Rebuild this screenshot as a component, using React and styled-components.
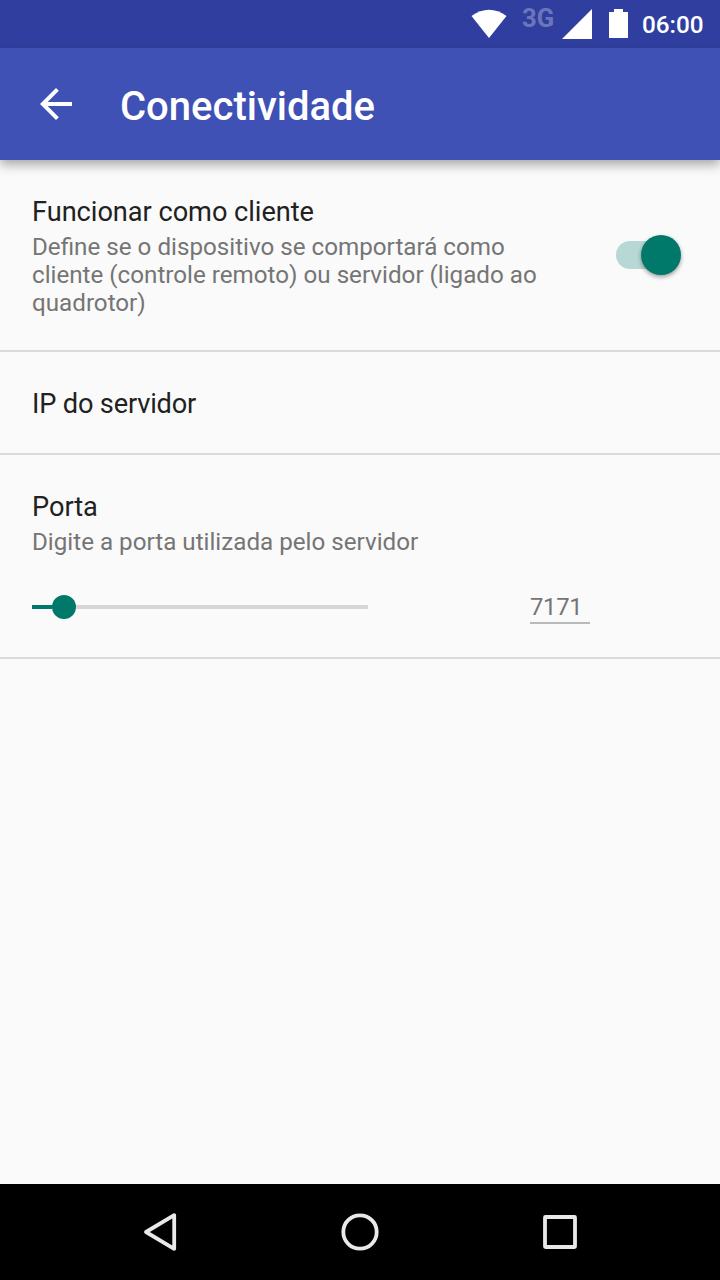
import React from "react";
import styled, { createGlobalStyle } from "styled-components";

const GlobalStyle = createGlobalStyle`
  * { box-sizing: border-box; }
  body { margin: 0; background: #fafafa; }
`;

const Screen = styled.div`
  display: flex;
  flex-direction: column;
  width: 720px;
  height: 1280px;
  background: #fafafa;
  font-family: Roboto, sans-serif;
  overflow: hidden;
`;

const StatusBar = styled.div`
  display: flex;
  flex: none;
  height: 48px;
  padding-right: 16.5px;
  justify-content: flex-end;
  align-items: flex-start;
  background: #303f9f;
  color: #fff;
`;

const StatusIcons = styled.svg`
  display: block;
  flex: none;
  fill: #fff;
`;

const NetworkType = styled.span`
  width: 32px;
  margin: 3px 8px 0 15px;
  font-size: 25.6px;
  line-height: 30px;
  font-weight: 700;
  color: rgba(255, 255, 255, 0.3);
  white-space: nowrap;
`;

const Clock = styled.span`
  width: 61.5px;
  margin-left: 14px;
  font-size: 24.3px;
  line-height: 48px;
  padding-top: 1px;
  font-weight: 500;
  white-space: nowrap;
`;

const AppBar = styled.header`
  display: flex;
  flex: none;
  position: relative;
  height: 112px;
  padding-left: 32px;
  align-items: center;
  background: #3f51b5;
  box-shadow: 0 5px 10px rgba(0, 0, 0, 0.32);
`;

const BackIcon = styled.svg`
  display: block;
  width: 48px;
  height: 48px;
  margin-right: 40px;
  fill: #fff;
`;

const Title = styled.h1`
  margin: 6px 0 0;
  font-size: 40px;
  line-height: 48px;
  font-weight: 500;
  color: #fff;
`;

const List = styled.main`
  flex: 1;
`;

const Preference = styled.section`
  display: flex;
  height: ${(p) => p.$height}px;
  padding: 36px 32px 0;
  border-bottom: 2px solid #dadada;
  flex-direction: ${(p) => (p.$stacked ? "column" : "row")};
  justify-content: ${(p) => (p.$stacked ? "flex-start" : "space-between")};
`;

const PreferenceTitle = styled.div`
  font-size: 27.2px;
  line-height: 32px;
  letter-spacing: ${(p) => p.$tracking || "-0.04px"};
  color: #212121;
`;

const Summary = styled.div`
  width: 530px;
  margin-top: 5px;
  font-size: 24.2px;
  line-height: 28px;
  color: #757575;
`;

const Switch = styled.div`
  display: flex;
  width: 65px;
  height: 28px;
  margin: 45px 7px 0 0;
  align-items: center;
  justify-content: flex-end;
  border-radius: 14px;
  background: linear-gradient(90deg, #b8d8d5 50px, transparent 50px);
`;

const SwitchThumb = styled.div`
  flex: none;
  width: 40px;
  height: 40px;
  border-radius: 50%;
  background: #00796b;
  box-shadow: 0 2px 4px rgba(0, 0, 0, 0.38);
`;

const PortRow = styled.div`
  display: flex;
  align-items: flex-start;
  margin-top: 34px;
`;

const Slider = styled.div`
  display: flex;
  width: 336px;
  height: 24px;
  margin: 5px 162px 0 0;
  align-items: center;
`;

const SliderTrack = styled.div`
  width: ${(p) => p.$width}px;
  height: 4px;
  background: ${(p) => (p.$filled ? "#00796b" : "#d6d6d6")};
`;

const SliderThumb = styled.div`
  width: 24px;
  height: 24px;
  border-radius: 50%;
  background: #00796b;
`;

const PortValue = styled.div`
  width: 60px;
  height: 34px;
  font-size: 23.8px;
  line-height: 34px;
  letter-spacing: -0.3px;
  color: #757575;
  border-bottom: 2px solid #b9b9b9;
`;

const NavBar = styled.nav`
  display: flex;
  flex: none;
  height: 96px;
  padding: 0 60px;
  background: #000;
`;

const NavButton = styled.div`
  display: flex;
  flex: 1;
  align-items: center;
  justify-content: center;
`;

const NavIcon = styled.svg`
  display: block;
  fill: none;
  stroke: #e9e9e9;
  stroke-width: 3.8;
  stroke-linejoin: round;
`;

export default function App() {
  return (
    <>
      <GlobalStyle />
      <Screen>
        <StatusBar>
          <StatusIcons width="36" height="48" viewBox="0 0 36 48">
            <path d="M0.5 16Q18 3.5 35.5 16L18 38Z" />
          </StatusIcons>
          <NetworkType>3G</NetworkType>
          <StatusIcons width="30" height="48" viewBox="0 0 30 48">
            <path d="M0 39L30 9V39Z" />
          </StatusIcons>
          <StatusIcons width="36" height="48" viewBox="-17 0 36 48">
            <path d="M0 12H5V9H14V12H19V38H0Z" />
          </StatusIcons>
          <Clock>06:00</Clock>
        </StatusBar>
        <AppBar>
          <BackIcon viewBox="0 0 24 24">
            <path d="M20 11H7.83l5.59-5.59L12 4l-8 8 8 8 1.41-1.41L7.83 13H20v-2z" />
          </BackIcon>
          <Title>Conectividade</Title>
        </AppBar>
        <List>
          <Preference $height={192}>
            <div>
              <PreferenceTitle>Funcionar como cliente</PreferenceTitle>
              <Summary>
                Define se o dispositivo se comportará como cliente (controle
                remoto) ou servidor (ligado ao quadrotor)
              </Summary>
            </div>
            <Switch>
              <SwitchThumb />
            </Switch>
          </Preference>
          <Preference $height={103}>
            <PreferenceTitle $tracking="-0.18px">IP do servidor</PreferenceTitle>
          </Preference>
          <Preference $height={204} $stacked>
            <PreferenceTitle>Porta</PreferenceTitle>
            <Summary>Digite a porta utilizada pelo servidor</Summary>
            <PortRow>
              <Slider>
                <SliderTrack $width={20} $filled />
                <SliderThumb />
                <SliderTrack $width={292} />
              </Slider>
              <PortValue>7171</PortValue>
            </PortRow>
          </Preference>
        </List>
        <NavBar>
          <NavButton>
            <NavIcon width="40" height="40" viewBox="0 0 40 40">
              <path d="M34.2 3.2V36.8L6 20Z" />
            </NavIcon>
          </NavButton>
          <NavButton>
            <NavIcon width="40" height="40" viewBox="0 0 40 40">
              <circle cx="20" cy="20" r="16.7" />
            </NavIcon>
          </NavButton>
          <NavButton>
            <NavIcon width="40" height="40" viewBox="0 0 40 40">
              <rect x="5" y="5" width="30" height="30" rx="0.5" />
            </NavIcon>
          </NavButton>
        </NavBar>
      </Screen>
    </>
  );
}
